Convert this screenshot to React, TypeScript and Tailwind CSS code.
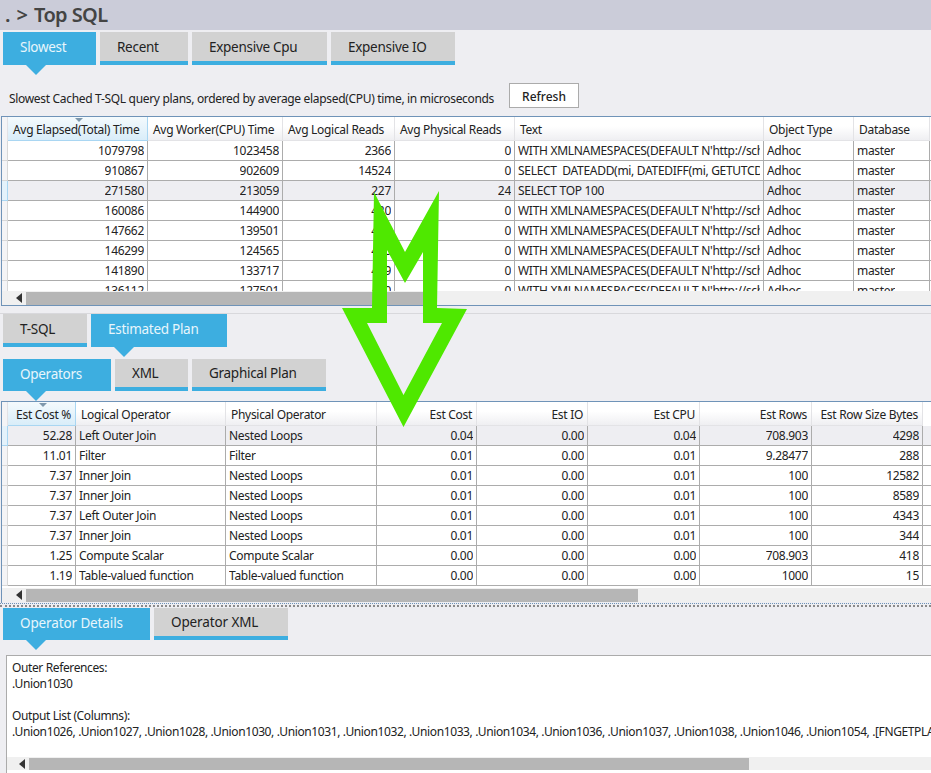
const font = { fontFamily: '"Noto Sans", "Open Sans", "Liberation Sans", sans-serif' };

function Tab({ label, active, w, wide, low }: { label: string; active?: boolean; w: number; wide?: boolean; low?: boolean }) {
  return (
    <div
      style={{ width: w }}
      className={`relative h-full shrink-0 flex items-center text-[13.5px] ${wide ? "tracking-[-0.12px]" : "tracking-[-0.28px]"} ${
        active ? "bg-[#3daee0] text-[#e8f6fc]" : "bg-[#d2d2d2] text-[#222] border-b-4 border-[#3daee0]"
      }`}
    >
      <span className={active ? (low ? "pl-[17px] pb-[1px]" : "pl-[17px] pb-[3px]") : "pl-[17px] pt-[1px]"}>{label}</span>
      {active && (
        <span className="absolute left-[23px] top-full w-0 h-0 border-l-[10px] border-r-[10px] border-t-[10px] border-l-transparent border-r-transparent border-t-[#3daee0]" />
      )}
    </div>
  );
}

type Col = { label: string; w: number; right?: boolean };

function Scrollbar({ left, width, h = 14 }: { left: number; width: number; h?: number }) {
  return (
    <div style={{ height: h }} className="flex items-center bg-[#f0f0f0] shrink-0">
      <div style={{ width: left }} className="shrink-0 flex justify-end pr-[4px]">
        <span className="w-0 h-0 border-y-[5px] border-y-transparent border-r-[6px] border-r-[#333]" />
      </div>
      <div style={{ width, height: h - 1 }} className="bg-[#b6b6b6]" />
    </div>
  );
}

function DataGrid({
  cols,
  rows,
  selected,
  sortX,
  height,
  numeric,
}: {
  cols: Col[];
  rows: string[][];
  selected: number;
  sortX: number;
  height: number;
  numeric: number[];
}) {
  return (
    <div style={{ height }} className="overflow-hidden bg-white text-[12px] tracking-[-0.3px] text-[#222] relative">
      <div className="flex h-[24px]">
        <div className="w-[6px] shrink-0 bg-[#f4f4f6] border-r border-[#e2e2e6]" />
        {cols.map((c, i) => (
          <div
            key={c.label}
            style={{ width: c.w }}
            className={`shrink-0 flex items-center whitespace-nowrap border-r border-b pt-[2px] ${
              i === 0
                ? "bg-gradient-to-b from-[#f4fafd] to-[#d9edf9] border-[#a9d6f2]"
                : "bg-gradient-to-b from-white from-40% to-[#efeff2] border-[#e3e3e6]"
            } ${c.right ? "justify-end pr-[4px]" : "pl-[5px]"}`}
          >
            {c.label}
          </div>
        ))}
      </div>
      <span
        style={{ left: sortX }}
        className="absolute top-[1px] w-0 h-0 border-x-[4px] border-x-transparent border-t-[4px] border-t-[#7f98ac]"
      />
      {rows.map((r, ri) => (
        <div key={ri} className={`flex h-[20px] ${ri === selected ? "bg-[#eeeef2]" : ""}`}>
          <div
            className={`w-[6px] shrink-0 border-b border-r ${
              ri === selected ? "bg-[#e4f2fb] border-[#a9d6f2]" : "bg-[#f4f4f6] border-[#d8d8d8]"
            }`}
          />
          {cols.map((c, i) => (
            <div
              key={c.label}
              style={{ width: c.w }}
              className={`shrink-0 flex items-center border-r border-b border-[#acacac] ${
                numeric.includes(i) ? "justify-end pr-[3px]" : "pl-[3px] pr-[3px]"
              }`}
            >
              <span className="overflow-hidden whitespace-pre">{r[i]}</span>
            </div>
          ))}
          <div className="flex-1 border-b border-[#acacac]" />
        </div>
      ))}
    </div>
  );
}

const topCols: Col[] = [
  { label: "Avg Elapsed(Total) Time", w: 140 },
  { label: "Avg Worker(CPU) Time", w: 135 },
  { label: "Avg Logical Reads", w: 112 },
  { label: "Avg Physical Reads", w: 120 },
  { label: "Text", w: 249 },
  { label: "Object Type", w: 90 },
  { label: "Database", w: 76 },
];

const W = "WITH XMLNAMESPACES(DEFAULT N'http://sch";
const topRows: string[][] = [
  ["1079798", "1023458", "2366", "0", W],
  ["910867", "902609", "14524", "0", "SELECT  DATEADD(mi, DATEDIFF(mi, GETUTCD"],
  ["271580", "213059", "227", "24", "SELECT TOP 100"],
  ["160086", "144900", "420", "0", W],
  ["147662", "139501", "420", "0", W],
  ["146299", "124565", "420", "0", W],
  ["141890", "133717", "429", "0", W],
  ["136112", "127501", "420", "0", W],
].map((r) => [...r, "Adhoc", "master"]);

const opCols: Col[] = [
  { label: "Est Cost %", w: 68, right: true },
  { label: "Logical Operator", w: 150 },
  { label: "Physical Operator", w: 151 },
  { label: "Est Cost", w: 100, right: true },
  { label: "Est IO", w: 111, right: true },
  { label: "Est CPU", w: 112, right: true },
  { label: "Est Rows", w: 112, right: true },
  { label: "Est Row Size Bytes", w: 111, right: true },
];
const opRows: string[][] = [
  ["52.28", "Left Outer Join", "Nested Loops", "0.04", "0.00", "0.04", "708.903", "4298"],
  ["11.01", "Filter", "Filter", "0.01", "0.00", "0.01", "9.28477", "288"],
  ["7.37", "Inner Join", "Nested Loops", "0.01", "0.00", "0.01", "100", "12582"],
  ["7.37", "Inner Join", "Nested Loops", "0.01", "0.00", "0.01", "100", "8589"],
  ["7.37", "Left Outer Join", "Nested Loops", "0.01", "0.00", "0.01", "100", "4343"],
  ["7.37", "Inner Join", "Nested Loops", "0.01", "0.00", "0.01", "100", "344"],
  ["1.25", "Compute Scalar", "Compute Scalar", "0.00", "0.00", "0.00", "708.903", "418"],
  ["1.19", "Table-valued function", "Table-valued function", "0.00", "0.00", "0.00", "1000", "15"],
];

export default function App() {
  return (
    <div style={font} className="relative w-[931px] h-[773px] overflow-hidden bg-[#eeeef2] flex flex-col">
      <div className="h-[30px] shrink-0 bg-[#cbccd9] text-[#444] text-[20px] font-semibold pl-[5px] leading-[29px] tracking-[-0.6px] flex">
        <span className="[word-spacing:2px] w-[29px] whitespace-nowrap">. &gt;</span>
        <span>Top SQL</span>
      </div>

      <div className="flex gap-[4px] h-[33px] mt-[2px] pl-[3px] shrink-0">
        <Tab label="Slowest" active w={93} />
        <Tab label="Recent" w={88} />
        <Tab label="Expensive Cpu" w={135} />
        <Tab label="Expensive IO" w={124} />
      </div>

      <div className="h-[51px] shrink-0 pl-[9px] pr-[352px] pt-[18px] text-[12px] text-[#222] flex items-start justify-between">
        <span className="pt-[7px] tracking-[-0.32px] whitespace-nowrap">
          Slowest Cached T-SQL query plans, ordered by average elapsed(CPU) time, in microseconds
        </span>
        <button className="w-[70px] h-[25px] shrink-0 pt-[2px] bg-white border border-[#ababab] text-[12px] font-medium text-[#222]">
          Refresh
        </button>
      </div>

      <div className="h-[190px] shrink-0 ml-[1px] border border-[#6f93b8] border-r-0 flex flex-col">
        <DataGrid cols={topCols} rows={topRows} selected={2} sortX={73} height={175} numeric={[0, 1, 2, 3]} />
        <Scrollbar left={24} width={397} />
      </div>

      <div className="h-[8px] shrink-0 border-b border-[#d8d8dc]" />

      <div className="flex gap-[4px] h-[33px] pl-[3px] shrink-0">
        <Tab label="T-SQL" w={84} />
        <Tab label="Estimated Plan" active w={136} />
      </div>

      <div className="flex gap-[4px] h-[32px] mt-[12px] pl-[3px] shrink-0">
        <Tab label="Operators" active low w={108} />
        <Tab label="XML" w={73} />
        <Tab label="Graphical Plan" w={134} />
      </div>

      <div className="h-[202px] mt-[10px] shrink-0 ml-[1px] border-t border-l border-[#6f93b8] flex flex-col">
        <DataGrid cols={opCols} rows={opRows} selected={0} sortX={37} height={186} numeric={[0, 3, 4, 5, 6, 7]} />
        <Scrollbar left={24} width={612} />
      </div>

      <div className="h-[4px] shrink-0 border-t border-[#6f93b8] border-b-2 border-b-[#8a8a8a] border-dotted" />

      <div className="flex gap-[4px] h-[32px] mt-[1px] pl-[3px] shrink-0">
        <Tab label="Operator Details" active low wide w={147} />
        <Tab label="Operator XML" wide w={134} />
      </div>

      <div className="flex-1 mt-[15px] ml-[6px] bg-white border-t border-l border-[#ababab] flex flex-col overflow-hidden text-[12px] text-[#222] tracking-[-0.38px]">
        <div className="flex-1 pl-[5px] pt-[4px] leading-[16px] whitespace-nowrap">
          <div>Outer References:</div>
          <div>.Union1030</div>
          <div>&nbsp;</div>
          <div>Output List (Columns):</div>
          <div>
            .Union1026, .Union1027, .Union1028, .Union1030, .Union1031, .Union1032, .Union1033, .Union1034, .Union1036, .Union1037, .Union1038, .Union1046, .Union1054, .[FNGETPLANS]
          </div>
        </div>
        <div className="bg-white mb-[3px]">
          <Scrollbar left={22} width={720} h={13} />
        </div>
      </div>

      <svg className="absolute left-0 top-0 pointer-events-none" width="931" height="773" viewBox="0 0 931 773">
        <path
          fillRule="evenodd"
          fill="#4fe800"
          d="M374 192 L405 252 L439 191 L437 308 L467 309 L403.5 427 L342 308 L372 308 Z M387 323 L367 323 L403.5 395 L442 323 L423 323 L423 252 L405 283 L387 250 Z"
        />
      </svg>
    </div>
  );
}
